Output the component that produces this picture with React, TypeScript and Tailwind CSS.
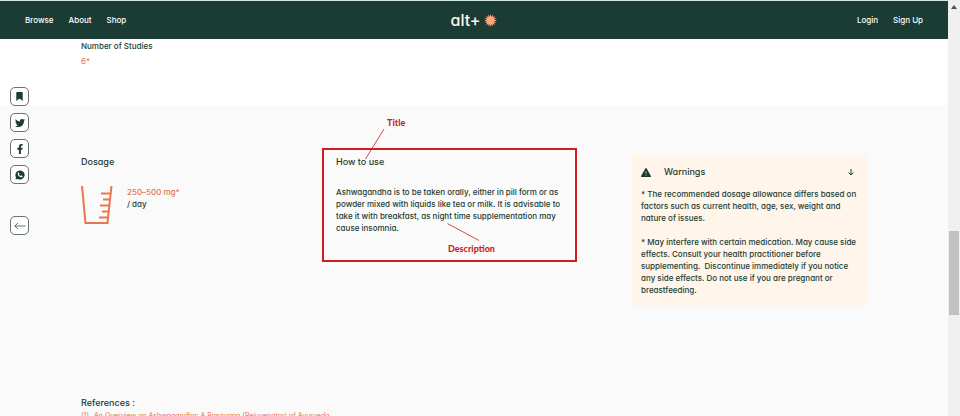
import React from 'react';
import { FaTwitter, FaFacebookF } from 'react-icons/fa';

const linkClass = 'hover:underline';

function Sunburst() {
  const points = Array.from({ length: 32 }, (_, i) => {
    const r = i % 2 === 0 ? 12 : 7;
    const a = (i * Math.PI) / 16;
    return `${12 + r * Math.sin(a)},${12 - r * Math.cos(a)}`;
  }).join(' ');
  return (
    <svg viewBox="0 0 24 24" className="size-[13px] text-[#ffa87c]" aria-hidden="true">
      <polygon points={points} fill="currentColor" />
    </svg>
  );
}

function Header() {
  return (
    <header className="grid h-[39px] shrink-0 grid-cols-3 items-center border-t border-[#d5e9e4] bg-[#1a3c34] px-[25px] text-[8px] font-medium text-white">
      <nav className="flex gap-[15px]" aria-label="Main">
        <a href="#browse" className={linkClass}>Browse</a>
        <a href="#about" className={linkClass}>About</a>
        <a href="#shop" className={linkClass}>Shop</a>
      </nav>
      <a href="#home" className="flex items-center justify-center gap-1">
        <span className="text-[16px] leading-5 font-medium text-[#fff6ea]">alt+</span>
        <Sunburst />
      </a>
      <nav className="flex justify-end gap-[15px]" aria-label="Account">
        <a href="#login" className={linkClass}>Login</a>
        <a href="#signup" className={linkClass}>Sign Up</a>
      </nav>
    </header>
  );
}

function RailButton({ label, children }: { label: string; children: React.ReactNode }) {
  return (
    <button
      type="button"
      aria-label={label}
      className="flex size-[19px] items-center justify-center rounded-[5px] border border-[#66736f] bg-white text-[#1a3c34]"
    >
      {children}
    </button>
  );
}

function ShareRail() {
  return (
    <aside className="absolute top-[87px] left-[10px] flex flex-col gap-[7px]">
      <RailButton label="Bookmark">
        <svg viewBox="0 0 7 9" className="h-[9px] w-[7px]" fill="currentColor" aria-hidden="true">
          <path d="M1 0h5a.7.7 0 0 1 .7.7V9L3.500 6.500.3 9V.7A.7.7 0 0 1 1 0z" />
        </svg>
      </RailButton>
      <RailButton label="Share on Twitter"><FaTwitter size={10} /></RailButton>
      <RailButton label="Share on Facebook"><FaFacebookF size={10} /></RailButton>
      <RailButton label="Share on WhatsApp">
        <svg viewBox="0 0 24 24" className="size-[10px]" aria-hidden="true">
          <path fill="currentColor" d="M12 1a11 11 0 0 0-9.600 16.400L1 23l5.800-1.400A11 11 0 1 0 12 1z" />
          <path fill="#fff" d="M8 6.200c.5-.4 1.200-.3 1.500.3l.9 2c.2.500.1.900-.2 1.300l-.7.900c1 1.700 2.200 2.800 4 3.600l.9-1c.3-.4.800-.5 1.200-.3l2 1c.6.300.7.800.5 1.400-.5 1.500-2 2.300-3.600 2C10.300 16.600 7.200 13.500 6.600 9.500c-.2-1.300.4-2.600 1.400-3.300z" />
        </svg>
      </RailButton>
      <div className="pt-[25px]">
        <RailButton label="Back">
          <svg viewBox="0 0 12 8" className="h-2 w-3" fill="none" stroke="currentColor" strokeWidth=".7" aria-hidden="true">
            <path d="M11.500 4H.8M4 1 .8 4 4 7" />
          </svg>
        </RailButton>
      </div>
    </aside>
  );
}

function Beaker() {
  return (
    <svg viewBox="0 0 32 39" className="h-[39px] w-8" fill="none" stroke="#e8764f" strokeWidth="2" aria-hidden="true">
      <path d="M1 0 4.500 37h22L30.500 0" />
      <path strokeWidth="1.800" d="M20 7.500h9M22 13.500h7M19 19.500h9M21 25.500h7M18 31.500h9" />
    </svg>
  );
}

function Dosage() {
  return (
    <section className="pt-2">
      <h2 className="text-[9px] leading-3 font-medium">Dosage</h2>
      <div className="mt-[18px] flex gap-[14px]">
        <Beaker />
        <p className="text-[8px] leading-3 font-medium">
          <span className="text-[#e3754f]">250–500 mg*</span>
          <br />
          / day
        </p>
      </div>
    </section>
  );
}

function HowToUse() {
  return (
    <section className="relative h-[114px] border-2 border-[#d01c22] px-3 pt-[6px]">
      <h2 className="text-[9px] leading-3 font-medium">How to use</h2>
      <p className="mt-[18px] text-[8px] leading-3 font-medium">
        Ashwagandha is to be taken orally, either in pill form or as powder mixed with liquids like tea or milk. It is advisable to take it with breakfast, as night time supplementation may cause insomnia.
      </p>
      <svg className="absolute -top-[22px] left-[41px] h-[32px] w-[20px]" viewBox="0 0 20 32" stroke="#d01c22" strokeWidth=".8" aria-hidden="true">
        <path d="M19 1 .5 31" />
      </svg>
      <span className="absolute -top-[33px] left-[63px] font-['Lato',sans-serif] text-[9px] leading-3 font-black text-[#d01c22]">Title</span>
      <svg className="absolute top-[73px] left-[123px] h-[18px] w-[33px]" viewBox="0 0 33 18" stroke="#d01c22" strokeWidth=".8" aria-hidden="true">
        <path d="M.5.5 32 17.500" />
      </svg>
      <span className="absolute top-[93px] left-[124px] font-['Lato',sans-serif] text-[9px] leading-3 font-black text-[#d01c22]">Description</span>
    </section>
  );
}

function Warnings() {
  return (
    <section className="mt-[6px] w-[236px] justify-self-end rounded-[5px] bg-[#fff5ea] px-[10px] pt-3 pb-[10px]">
      <div className="flex items-center">
        <svg viewBox="0 0 10 9" className="h-[9px] w-[10px]" aria-hidden="true">
          <path fill="currentColor" d="M4.300.5a.8.8 0 0 1 1.400 0L9.900 8a.7.7 0 0 1-.6 1H.7A.7.7 0 0 1 .1 8z" />
          <path stroke="#fff5ea" strokeWidth=".6" d="M5 3v3M5 6.800v1" />
        </svg>
        <h2 className="ml-[13px] text-[9px] leading-3 font-medium">Warnings</h2>
        <button type="button" aria-label="Toggle warnings" className="mr-[3px] ml-auto">
          <svg viewBox="0 0 6 7" className="block h-[7px] w-[6px]" fill="none" stroke="currentColor" aria-hidden="true">
            <path d="M3 0v6M.5 3.500 3 6l2.500-2.500" />
          </svg>
        </button>
      </div>
      <div className="mt-[10px] -mr-1 text-[8px] leading-3 font-medium">
        <p>* The recommended dosage allowance differs based on<br />factors such as current health, age, sex, weight and<br />nature of issues.</p>
        <p className="mt-3">* May interfere with certain medication. May cause side<br />effects. Consult your health practitioner before<br />supplementing.&nbsp; Discontinue immediately if you notice<br />any side effects. Do not use if you are pregnant or<br />breastfeeding.</p>
      </div>
    </section>
  );
}

function ScrollTrack() {
  return (
    <div className="flex w-3 shrink-0 flex-col items-center bg-[#f0f0f0]" aria-hidden="true">
      <svg viewBox="0 0 6 4" className="mt-[5px] h-1 w-[6px]">
        <path d="M3 0l3 4H0z" fill="#505050" />
      </svg>
      <div className="mt-[222px] h-[84px] w-[10px] bg-[#c1c1c1]" />
    </div>
  );
}

export default function App() {
  return (
    <div className="flex h-screen overflow-hidden bg-white font-['Inter','Liberation_Sans',sans-serif] text-[#1a3c34] [font-feature-settings:'cv11']">
      <div className="relative flex min-w-0 flex-1 flex-col overflow-hidden">
        <Header />
        <ShareRail />
        <main className="flex-1">
          <section className="h-[66px] px-[81px] pt-px text-[8px] leading-3">
            <h2 className="font-medium">Number of Studies</h2>
            <p className="mt-[3px] text-[#e3754f]">6*</p>
          </section>
          <div className="bg-[#fafafa] px-[81px] pt-[43px]">
            <div className="grid grid-cols-[241fr_255fr_290fr] items-start">
              <Dosage />
              <HowToUse />
              <Warnings />
            </div>
            <section className="pt-[91px] pb-10">
              <h2 className="text-[9px] leading-3 font-medium">References :</h2>
              <ol className="mt-px text-[7px] leading-3 text-[#e3754f]">
                <li className="flex gap-[5px]">
                  <span>(1)</span>
                  <a href="#reference-1" className={linkClass}>An Overview on Ashwagandha: A Rasayana (Rejuvenator) of Ayurveda</a>
                </li>
              </ol>
            </section>
          </div>
        </main>
      </div>
      <ScrollTrack />
    </div>
  );
}
